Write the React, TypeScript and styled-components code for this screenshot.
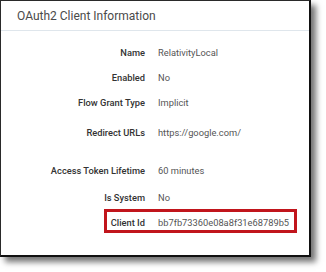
import styled, { createGlobalStyle, css } from 'styled-components';

const GlobalStyle = createGlobalStyle`
    html, body {
        margin: 0;
        padding: 0;
        background: #ffffff;
    }

    body {
        font-family: Roboto, "Liberation Sans", sans-serif;
    }
`;

const Page = styled.div`
    width: 326px;
    height: 272px;
    background: #ffffff;
`;

const Frame = styled.div`
    box-sizing: border-box;
    width: 311px;
    height: 257px;
    background: #ffffff;
    border-left: 1px solid #2a2a2a;
    border-top: 1px solid #2a2a2a;
    border-right: 2px solid #111111;
    border-bottom: 2px solid #111111;
    box-shadow: 5px 5px 6px rgba(0, 0, 0, 0.55);
`;

const Header = styled.div`
    box-sizing: border-box;
    height: 30px;
    padding: 0 0 0 16px;
    display: flex;
    align-items: center;
    border-bottom: 1px solid #dfe6ec;
    font-size: 12px;
    color: #4a4a4a;
`;

const Body = styled.div`
    padding-top: 8.5px;
    display: flex;
    flex-direction: column;
`;

const Row = styled.div<{ $offset?: number; $highlight?: boolean }>`
    position: relative;
    display: grid;
    grid-template-columns: 144px 1fr;
    column-gap: 13px;
    align-items: center;
    height: 25px;
    margin-top: ${(p) => p.$offset ?? 0}px;
    font-size: 9.3px;

    ${(p) =>
        p.$highlight &&
        css`
            &::after {
                content: '';
                position: absolute;
                left: 103px;
                width: 193px;
                top: -0.5px;
                height: 24px;
                box-sizing: border-box;
                border: 3px solid #c1151c;
            }
        `}
`;

const Label = styled.span`
    text-align: right;
    font-weight: 500;
    color: #333333;
`;

const Value = styled.span`
    color: #555555;
`;

const fields = [
    { label: 'Name', value: 'RelativityLocal', offset: 0 },
    { label: 'Enabled', value: 'No', offset: 0 },
    { label: 'Flow Grant Type', value: 'Implicit', offset: 0 },
    { label: 'Redirect URLs', value: 'https://google.com/', offset: 5 },
    { label: 'Access Token Lifetime', value: '60 minutes', offset: 13 },
    { label: 'Is System', value: 'No', offset: 2 },
    { label: 'Client Id', value: 'bb7fb73360e08a8f31e68789b5', offset: 0, highlight: true },
];

export default function App() {
    return (
        <Page>
            <GlobalStyle />
            <Frame>
                <Header>OAuth2 Client Information</Header>
                <Body>
                    {fields.map((f) => (
                        <Row key={f.label} $offset={f.offset} $highlight={f.highlight}>
                            <Label>{f.label}</Label>
                            <Value>{f.value}</Value>
                        </Row>
                    ))}
                </Body>
            </Frame>
        </Page>
    );
}
